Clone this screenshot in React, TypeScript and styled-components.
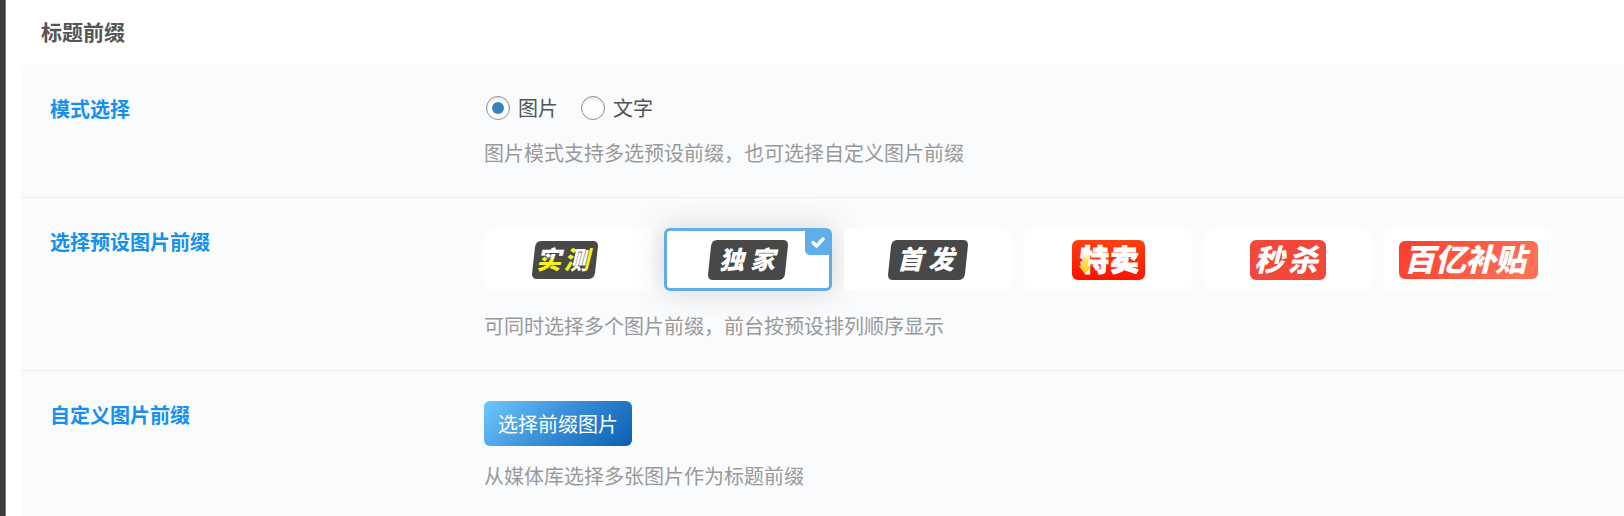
import React, { useState } from "react";
import styled, { createGlobalStyle } from "styled-components";

const GlobalStyle = createGlobalStyle`
  *, *::before, *::after { box-sizing: border-box; }
  body {
    margin: 0;
    background: #fff;
    color: #505357;
    font-family: "Noto Sans CJK SC", "Liberation Sans", sans-serif;
    font-size: 20px;
    line-height: 28px;
  }
`;

const Page = styled.div`
  display: flex;
  min-height: 100vh;
`;

const MenuEdge = styled.div`
  flex: 0 0 6px;
  background: #3b3b3b;
  border-right: 1px solid #777;
`;

const Main = styled.main`
  flex: 1;
  min-width: 0;
  display: flex;
  flex-direction: column;
  padding-left: 15px;
`;

const Heading = styled.h2`
  margin: 0;
  padding: 17px 20px 19px;
  font-size: 21px;
  line-height: 29px;
  font-weight: 700;
  color: #555;
`;

const Panel = styled.section`
  flex: 1;
  background: #fafbfd;
`;

const Row = styled.div`
  display: flex;
  padding: 30px 30px 30px 29px;
  border-bottom: 1px solid #ebedef;

  &:last-child {
    padding-bottom: 26px;
    border-bottom: 0;
  }
`;

const RowTitle = styled.h4`
  flex: 0 0 434px;
  margin: 0;
  font-size: 20px;
  font-weight: 700;
  color: #1590ee;
`;

const Field = styled.div`
  flex: 1;
  min-width: 0;
`;

const Hint = styled.p`
  margin: 16px 0 0;
  color: #999;
`;

const RadioList = styled.div`
  display: flex;
  gap: 23px;
  padding: 0 0 2px 2px;
  line-height: 26px;
`;

const RadioLabel = styled.label`
  display: flex;
  align-items: center;
  gap: 8px;
  cursor: pointer;
`;

const Radio = styled.input`
  appearance: none;
  display: grid;
  place-items: center;
  width: 24px;
  height: 24px;
  margin: 0;
  border: 1px solid #8c8f94;
  border-radius: 50%;
  background: #fff;
  box-shadow: inset 0 2px 3px rgba(0, 0, 0, 0.1);

  &:checked::before {
    content: "";
    width: 12px;
    height: 12px;
    border-radius: 50%;
    background: #3582c4;
  }
`;

const CardList = styled.div`
  display: flex;
  flex-wrap: wrap;
  gap: 12px;
  padding-bottom: 5px;
`;

const Card = styled.label<{ $selected: boolean }>`
  position: relative;
  display: flex;
  align-items: center;
  justify-content: center;
  width: 168px;
  height: 63px;
  border: 3px solid ${(p) => (p.$selected ? "#5faeea" : "#fff")};
  border-radius: 6px;
  background: #fff;
  box-shadow: ${(p) => (p.$selected ? "0 0 30px rgba(70, 60, 65, 0.2)" : "none")};
  cursor: pointer;
`;

const CardInput = styled.input`
  position: absolute;
  inset: 0;
  width: 100%;
  height: 100%;
  margin: 0;
  opacity: 0;
  cursor: pointer;
`;

const Corner = styled.span`
  position: absolute;
  top: -1px;
  right: -1px;
  display: flex;
  align-items: center;
  justify-content: center;
  width: 25px;
  height: 25px;
  border-radius: 0 2px 0 5px;
  background: #5faeea;
`;

const BadgeArt = styled.svg`
  display: block;
  overflow: visible;
  font-family: "Noto Sans CJK SC", sans-serif;
  font-weight: 900;
`;

const PickButton = styled.button`
  display: block;
  height: 45px;
  padding: 0 14px;
  border: 0;
  border-radius: 6px;
  background: linear-gradient(135deg, #6ac2fa 5%, #3d92d9 45%, #0a5fb4 100%);
  color: #fff;
  font: inherit;
  cursor: pointer;
`;

type Glyph = { c: string; x: number; fill?: string };
type Badge = {
  name: string;
  width: number;
  height: number;
  canvas?: number;
  shape: "slant" | "round";
  fill: string;
  size: number;
  baseline: number;
  italic?: boolean;
  stroke: number;
  glyphs: Glyph[];
};

const badges: Badge[] = [
  {
    name: "shice", width: 66, height: 38, canvas: 72, shape: "slant", fill: "#484848", size: 25, baseline: 28, italic: true, stroke: 0,
    glyphs: [{ c: "实", x: 4, fill: "url(#toneShi)" }, { c: "测", x: 32, fill: "url(#toneCe)" }],
  },
  {
    name: "dujia", width: 80, height: 40, shape: "slant", fill: "#484848", size: 25, baseline: 29, italic: true, stroke: 0,
    glyphs: [{ c: "独", x: 11 }, { c: "家", x: 42 }],
  },
  {
    name: "shoufa", width: 80, height: 40, shape: "slant", fill: "#484848", size: 26, baseline: 29, italic: true, stroke: 0,
    glyphs: [{ c: "首", x: 9 }, { c: "发", x: 40 }],
  },
  {
    name: "temai", width: 73, height: 40, shape: "round", fill: "url(#bgHot)", size: 29, baseline: 31, stroke: 1,
    glyphs: [{ c: "特", x: 8 }, { c: "卖", x: 38 }],
  },
  {
    name: "miaosha", width: 76, height: 40, shape: "round", fill: "#f3473a", size: 30, baseline: 31, italic: true, stroke: 0,
    glyphs: [{ c: "秒", x: 4 }, { c: "杀", x: 38 }],
  },
  {
    name: "baiyi", width: 139, height: 38, shape: "round", fill: "url(#bgSubsidy)", size: 31, baseline: 30, italic: true, stroke: 0,
    glyphs: [{ c: "百", x: 5 }, { c: "亿", x: 36 }, { c: "补", x: 66 }, { c: "贴", x: 96 }],
  },
];

const slantPath = (w: number, h: number) =>
  `M9 0H${w - 5}Q${w} 0 ${w} 5L${w - 3} ${h - 6}Q${w - 4} ${h} ${w - 10} ${h}H5Q0 ${h} 0 ${h - 5}L3 6Q4 0 9 0Z`;

function BadgeImage({ badge }: { badge: Badge }) {
  const { width, height, fill } = badge;
  const canvas = badge.canvas ?? width;
  return (
    <BadgeArt width={canvas} height={height} viewBox={`0 0 ${canvas} ${height}`}>
      {badge.shape === "slant" ? (
        <path d={slantPath(width, height)} fill={fill} />
      ) : (
        <rect width={width} height={height} rx="6" fill={fill} />
      )}
      {badge.glyphs.map((g) => (
        <text
          key={g.c}
          x={g.x}
          y={badge.baseline}
          fontSize={badge.size}
          fontStyle={badge.italic ? "italic" : "normal"}
          fill={g.fill ?? "#fff"}
          stroke={badge.stroke ? "#fff" : "none"}
          strokeWidth={badge.stroke}
        >
          {g.c}
        </text>
      ))}
      {badge.name === "temai" && (
        <path d="M11 13h6l-1 13h3l-6 8-6-8h3z" fill="url(#arrow)" />
      )}
    </BadgeArt>
  );
}

function BadgePaints() {
  return (
    <svg width="0" height="0" style={{ position: "absolute" }} aria-hidden="true">
      <defs>
        <linearGradient id="toneShi" x1="0.35" y1="1" x2="0.65" y2="0">
          <stop offset="0.5" stopColor="#f4f51a" />
          <stop offset="0.5" stopColor="#fff" />
        </linearGradient>
        <linearGradient id="toneCe" x1="0" y1="0.5" x2="1" y2="0.7">
          <stop offset="0.34" stopColor="#f4f51a" />
          <stop offset="0.34" stopColor="#fff" />
          <stop offset="0.76" stopColor="#fff" />
          <stop offset="0.76" stopColor="#f4f51a" />
          <stop offset="0.9" stopColor="#f4f51a" />
          <stop offset="0.9" stopColor="#fff" />
        </linearGradient>
        <linearGradient id="bgHot" x1="0" y1="0" x2="0" y2="1">
          <stop offset="0" stopColor="#ff4010" />
          <stop offset="1" stopColor="#fc1200" />
        </linearGradient>
        <linearGradient id="bgSubsidy" x1="0" y1="0" x2="1" y2="0.2">
          <stop offset="0" stopColor="#f83d2c" />
          <stop offset="1" stopColor="#ff7054" />
        </linearGradient>
        <linearGradient id="arrow" x1="0" y1="0" x2="0" y2="1">
          <stop offset="0" stopColor="#fff" />
          <stop offset="0.4" stopColor="#ffe14a" />
          <stop offset="1" stopColor="#ffc928" />
        </linearGradient>
      </defs>
    </svg>
  );
}

export default function App() {
  const [mode, setMode] = useState("图片");
  const [picked, setPicked] = useState<string[]>(["dujia"]);
  const toggle = (name: string) =>
    setPicked((list) => (list.includes(name) ? list.filter((n) => n !== name) : [...list, name]));

  return (
    <Page>
      <GlobalStyle />
      <BadgePaints />
      <MenuEdge />
      <Main>
        <Heading>标题前缀</Heading>
        <Panel>
          <Row>
            <RowTitle>模式选择</RowTitle>
            <Field>
              <RadioList role="radiogroup" aria-label="模式选择">
                {["图片", "文字"].map((m) => (
                  <RadioLabel key={m}>
                    <Radio type="radio" name="mode" value={m} checked={mode === m} onChange={() => setMode(m)} />
                    {m}
                  </RadioLabel>
                ))}
              </RadioList>
              <Hint>图片模式支持多选预设前缀，也可选择自定义图片前缀</Hint>
            </Field>
          </Row>
          <Row>
            <RowTitle>选择预设图片前缀</RowTitle>
            <Field>
              <CardList>
                {badges.map((b) => {
                  const selected = picked.includes(b.name);
                  return (
                    <Card key={b.name} $selected={selected}>
                      <BadgeImage badge={b} />
                      {selected && (
                        <Corner>
                          <svg width="14" height="11" viewBox="0 0 14 11" fill="none" aria-hidden="true">
                            <path d="M2 5.5l3.5 3.5L12 2" stroke="#fff" strokeWidth="3.4" strokeLinecap="round" strokeLinejoin="round" />
                          </svg>
                        </Corner>
                      )}
                      <CardInput type="checkbox" name="prefix" value={b.name} checked={selected} onChange={() => toggle(b.name)} />
                    </Card>
                  );
                })}
              </CardList>
              <Hint>可同时选择多个图片前缀，前台按预设排列顺序显示</Hint>
            </Field>
          </Row>
          <Row>
            <RowTitle>自定义图片前缀</RowTitle>
            <Field>
              <PickButton type="button">选择前缀图片</PickButton>
              <Hint>从媒体库选择多张图片作为标题前缀</Hint>
            </Field>
          </Row>
        </Panel>
      </Main>
    </Page>
  );
}
